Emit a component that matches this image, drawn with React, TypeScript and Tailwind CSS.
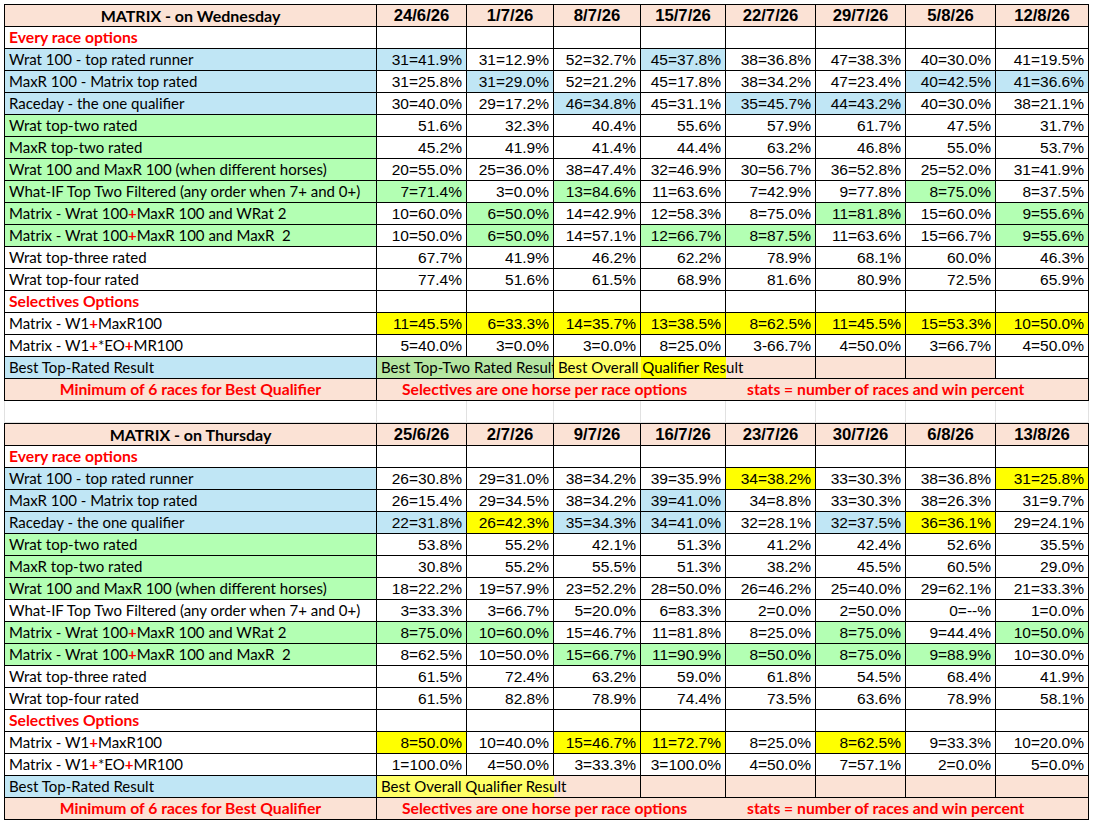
import React from "react";

type Row =
  | { kind: "section"; label: string }
  | { kind: "data"; label: string; lbg?: "b" | "g"; cells: string[] };

const BG: Record<string, string> = {
  b: "bg-[#c0e6f5]",
  g: "bg-[#b3ffb3]",
  y: "bg-[#ffff00]",
};

const COLS = "grid grid-cols-[372px_90px_87px_87px_85px_90px_90px_90px_93px]";
const CELL = "h-[22px] border-r border-b border-black flex items-center overflow-hidden whitespace-nowrap";
const LABEL = "pl-[4px] text-[15px] font-['Lato',sans-serif] text-black";
const NUM = "justify-end pr-[4px] text-[15.5px] font-['Liberation_Sans',Arial,sans-serif] text-black";
const RED = "text-[#ff0000] font-bold text-[15.7px] font-['Lato',sans-serif]";

const wednesday: Row[] = [
  { kind: "section", label: "Every race options" },
  { kind: "data", label: "Wrat 100 - top rated runner", lbg: "b", cells: ["31=41.9%*b", "31=12.9%", "52=32.7%", "45=37.8%*b", "38=36.8%", "47=38.3%", "40=30.0%", "41=19.5%"] },
  { kind: "data", label: "MaxR 100 - Matrix top rated", lbg: "b", cells: ["31=25.8%", "31=29.0%*b", "52=21.2%", "45=17.8%", "38=34.2%", "47=23.4%", "40=42.5%*b", "41=36.6%*b"] },
  { kind: "data", label: "Raceday - the one qualifier", lbg: "b", cells: ["30=40.0%", "29=17.2%", "46=34.8%*b", "45=31.1%", "35=45.7%*b", "44=43.2%*b", "40=30.0%", "38=21.1%"] },
  { kind: "data", label: "Wrat top-two rated", lbg: "g", cells: ["51.6%", "32.3%", "40.4%", "55.6%", "57.9%", "61.7%", "47.5%", "31.7%"] },
  { kind: "data", label: "MaxR top-two rated", lbg: "g", cells: ["45.2%", "41.9%", "41.4%", "44.4%", "63.2%", "46.8%", "55.0%", "53.7%"] },
  { kind: "data", label: "Wrat 100 and MaxR 100 (when different horses)", lbg: "g", cells: ["20=55.0%", "25=36.0%", "38=47.4%", "32=46.9%", "30=56.7%", "36=52.8%", "25=52.0%", "31=41.9%"] },
  { kind: "data", label: "What-IF Top Two Filtered (any order when 7+ and 0+)", lbg: "g", cells: ["7=71.4%*g", "3=0.0%", "13=84.6%*g", "11=63.6%", "7=42.9%", "9=77.8%", "8=75.0%*g", "8=37.5%"] },
  { kind: "data", label: "Matrix - Wrat 100^MaxR 100 and WRat 2", lbg: "g", cells: ["10=60.0%", "6=50.0%*g", "14=42.9%", "12=58.3%", "8=75.0%", "11=81.8%*g", "15=60.0%", "9=55.6%*g"] },
  { kind: "data", label: "Matrix - Wrat 100^MaxR 100 and MaxR  2", lbg: "g", cells: ["10=50.0%", "6=50.0%*g", "14=57.1%", "12=66.7%*g", "8=87.5%*g", "11=63.6%", "15=66.7%", "9=55.6%*g"] },
  { kind: "data", label: "Wrat top-three rated", cells: ["67.7%", "41.9%", "46.2%", "62.2%", "78.9%", "68.1%", "60.0%", "46.3%"] },
  { kind: "data", label: "Wrat top-four rated", cells: ["77.4%", "51.6%", "61.5%", "68.9%", "81.6%", "80.9%", "72.5%", "65.9%"] },
  { kind: "section", label: "Selectives Options" },
  { kind: "data", label: "Matrix - W1^MaxR100", cells: ["11=45.5%*y", "6=33.3%*y", "14=35.7%*y", "13=38.5%*y", "8=62.5%*y", "11=45.5%*y", "15=53.3%*y", "10=50.0%*y"] },
  { kind: "data", label: "Matrix - W1^*EO^MR100", cells: ["5=40.0%", "3=0.0%", "3=0.0%", "8=25.0%", "3-66.7%", "4=50.0%", "3=66.7%", "4=50.0%"] },
];

const thursday: Row[] = [
  { kind: "section", label: "Every race options" },
  { kind: "data", label: "Wrat 100 - top rated runner", lbg: "b", cells: ["26=30.8%", "29=31.0%", "38=34.2%", "39=35.9%", "34=38.2%*y", "33=30.3%", "38=36.8%", "31=25.8%*y"] },
  { kind: "data", label: "MaxR 100 - Matrix top rated", lbg: "b", cells: ["26=15.4%", "29=34.5%", "38=34.2%", "39=41.0%*b", "34=8.8%", "33=30.3%", "38=26.3%", "31=9.7%"] },
  { kind: "data", label: "Raceday - the one qualifier", lbg: "b", cells: ["22=31.8%*b", "26=42.3%*y", "35=34.3%*b", "34=41.0%*b", "32=28.1%", "32=37.5%*b", "36=36.1%*y", "29=24.1%"] },
  { kind: "data", label: "Wrat top-two rated", lbg: "g", cells: ["53.8%", "55.2%", "42.1%", "51.3%", "41.2%", "42.4%", "52.6%", "35.5%"] },
  { kind: "data", label: "MaxR top-two rated", lbg: "g", cells: ["30.8%", "55.2%", "55.5%", "51.3%", "38.2%", "45.5%", "60.5%", "29.0%"] },
  { kind: "data", label: "Wrat 100 and MaxR 100 (when different horses)", lbg: "g", cells: ["18=22.2%", "19=57.9%", "23=52.2%", "28=50.0%", "26=46.2%", "25=40.0%", "29=62.1%", "21=33.3%"] },
  { kind: "data", label: "What-IF Top Two Filtered (any order when 7+ and 0+)", cells: ["3=33.3%", "3=66.7%", "5=20.0%", "6=83.3%", "2=0.0%", "2=50.0%", "0=--%", "1=0.0%"] },
  { kind: "data", label: "Matrix - Wrat 100^MaxR 100 and WRat 2", lbg: "g", cells: ["8=75.0%*g", "10=60.0%*g", "15=46.7%", "11=81.8%", "8=25.0%", "8=75.0%*g", "9=44.4%", "10=50.0%*g"] },
  { kind: "data", label: "Matrix - Wrat 100^MaxR 100 and MaxR  2", lbg: "g", cells: ["8=62.5%", "10=50.0%", "15=66.7%*g", "11=90.9%*g", "8=50.0%*g", "8=75.0%*g", "9=88.9%*g", "10=30.0%"] },
  { kind: "data", label: "Wrat top-three rated", cells: ["61.5%", "72.4%", "63.2%", "59.0%", "61.8%", "54.5%", "68.4%", "41.9%"] },
  { kind: "data", label: "Wrat top-four rated", cells: ["61.5%", "82.8%", "78.9%", "74.4%", "73.5%", "63.6%", "78.9%", "58.1%"] },
  { kind: "section", label: "Selectives Options" },
  { kind: "data", label: "Matrix - W1^MaxR100", cells: ["8=50.0%*y", "10=40.0%", "15=46.7%*y", "11=72.7%*y", "8=25.0%", "8=62.5%*y", "9=33.3%", "10=20.0%"] },
  { kind: "data", label: "Matrix - W1^*EO^MR100", cells: ["1=100.0%", "4=50.0%", "3=33.3%", "3=100.0%", "4=50.0%", "7=57.1%", "2=0.0%", "5=0.0%"] },
];

// "^" marks the red plus signs in the row names
function Label({ text }: { text: string }) {
  const parts = text.split("^");
  return (
    <span className="whitespace-pre">
      {parts.map((p, i) => (
        <React.Fragment key={i}>
          {i > 0 && <span className="text-[#ff0000] font-bold">+</span>}
          {p}
        </React.Fragment>
      ))}
    </span>
  );
}

function BestRowWed() {
  return (
    <>
      <div className={`${CELL} ${LABEL} ${BG.b}`}>Best Top-Rated Result</div>
      <div className={`${CELL} ${LABEL} col-span-2 bg-[#b5e6a2]`}>Best Top-Two Rated Result</div>
      <div
        className={`${CELL} ${LABEL} col-span-3 bg-[linear-gradient(to_right,#ffff66_87px,#ffff00_87px,#ffff00_172px,#fbe2d5_172px)]`}
      >
        Best Overall Qualifier Result
      </div>
      <div className={`${CELL} bg-[#fbe2d5]`} />
      <div className={`${CELL} bg-[#fbe2d5]`} />
      <div className={`${CELL} bg-white`} />
    </>
  );
}

function BestRowThu() {
  return (
    <>
      <div className={`${CELL} ${LABEL} ${BG.b}`}>Best Top-Rated Result</div>
      <div
        className={`${CELL} ${LABEL} col-span-3 bg-[linear-gradient(to_right,#ffff66_177px,#fbe2d5_177px)]`}
      >
        Best Overall Qualifier Result
      </div>
      {[0, 1, 2, 3, 4].map((i) => (
        <div key={i} className={`${CELL} bg-[#fbe2d5]`} />
      ))}
    </>
  );
}

function Matrix({ title, dates, rows, best }: { title: string; dates: string[]; rows: Row[]; best: React.ReactNode }) {
  return (
    <div className={`${COLS} border-t border-l border-black w-[1085px]`}>
      <div className={`${CELL} justify-center bg-[#fbe2d5] font-bold text-[16px] font-['Lato',sans-serif]`}>{title}</div>
      {dates.map((d) => (
        <div key={d} className={`${CELL} justify-center bg-[#fbe2d5] font-bold text-[16.7px] font-['Liberation_Sans',Arial,sans-serif]`}>
          {d}
        </div>
      ))}

      {rows.map((r, ri) =>
        r.kind === "section" ? (
          <React.Fragment key={ri}>
            <div className={`${CELL} pl-[4px] ${RED}`}>{r.label}</div>
            {dates.map((d) => (
              <div key={d} className={CELL} />
            ))}
          </React.Fragment>
        ) : (
          <React.Fragment key={ri}>
            <div className={`${CELL} ${LABEL} ${r.lbg ? BG[r.lbg] : ""}`}>
              <Label text={r.label} />
            </div>
            {r.cells.map((c, ci) => {
              const [v, mark] = c.split("*");
              return (
                <div key={ci} className={`${CELL} ${NUM} ${mark ? BG[mark] : ""}`}>
                  {v}
                </div>
              );
            })}
          </React.Fragment>
        )
      )}

      {best}

      <div className={`${CELL} justify-center bg-[#fbe2d5] ${RED}`}>Minimum of 6 races for Best Qualifier</div>
      <div className={`${CELL} col-span-8 bg-[#fbe2d5] ${RED}`}>
        <span className="w-[370px] pl-[25px]">Selectives are one horse per race options</span>
        <span>stats = number of races and win percent</span>
      </div>
    </div>
  );
}

export default function App() {
  return (
    <div className="w-[1096px] h-[824px] overflow-hidden bg-white pt-[4px] pl-[4px]">
      <Matrix
        title="MATRIX - on Wednesday"
        dates={["24/6/26", "1/7/26", "8/7/26", "15/7/26", "22/7/26", "29/7/26", "5/8/26", "12/8/26"]}
        rows={wednesday}
        best={<BestRowWed />}
      />
      {/* empty spreadsheet row between the two blocks */}
      <div className={`${COLS} border-l border-[#e1e1e1] w-[1085px]`}>
        {Array.from({ length: 9 }).map((_, i) => (
          <div key={i} className="h-[22px] border-r border-b border-[#e1e1e1]" />
        ))}
      </div>
      <Matrix
        title="MATRIX - on Thursday"
        dates={["25/6/26", "2/7/26", "9/7/26", "16/7/26", "23/7/26", "30/7/26", "6/8/26", "13/8/26"]}
        rows={thursday}
        best={<BestRowThu />}
      />
    </div>
  );
}
